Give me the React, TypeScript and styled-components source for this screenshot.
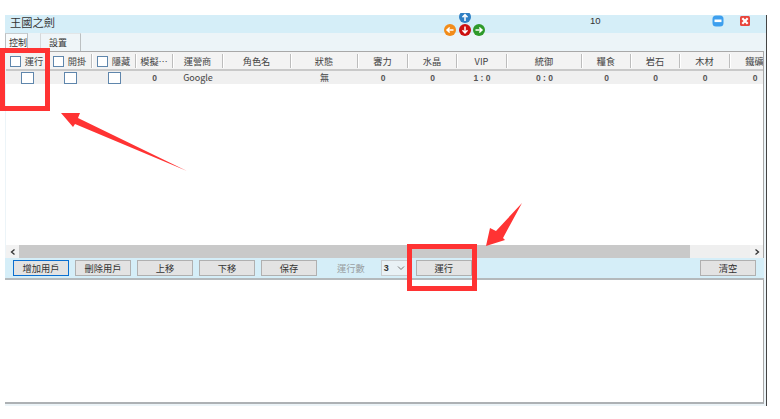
import React from "react";
import styled, { createGlobalStyle } from "styled-components";

const Global = createGlobalStyle`
  html, body { margin: 0; padding: 0; background: #fff; }
  body { width: 780px; height: 419px; overflow: hidden; font-family: "Noto Sans CJK TC", "Liberation Sans", sans-serif; color: #3a3a3a; }
`;

const Page = styled.div`
  position: relative;
  width: 780px;
  height: 419px;
  padding: 15px 0 0 5px;
  box-sizing: border-box;
  overflow: hidden;
`;

const Win = styled.div`
  width: 762px;
  height: 391px;
  display: flex;
  flex-direction: column;
  border-right: 1px solid #444;
  box-sizing: border-box;
  background: #ecf4f8;
`;

const TitleBar = styled.div`
  height: 18px;
  flex: none;
  background: #d5eef8;
  display: flex;
  align-items: flex-start;
  padding-left: 5px;
`;

const Title = styled.div`
  font-size: 11.25px;
  line-height: 14px;
  color: #333;
  flex: none;
`;

const Counter = styled.div`
  font-family: "Liberation Sans", sans-serif;
  font-size: 9.5px;
  line-height: 12px;
  margin: 0 0 0 535px;
  width: 122px;
  flex: none;
  color: #333;
`;

const WinBtn = styled.svg`
  width: 12px;
  height: 12px;
  flex: none;
  margin-right: 15px;
  margin-top: 0;
`;

const Nav = styled.svg`
  position: absolute;
  left: 442px;
  top: 13px;
  width: 46px;
  height: 24px;
`;

const Tabs = styled.div`
  height: 18px;
  flex: none;
  display: flex;
  background: #ecf4f8;
`;

const Tab = styled.div<{ $active?: boolean }>`
  width: ${(p) => (p.$active ? "23px" : "41px")};
  margin-right: ${(p) => (p.$active ? "12px" : "0")};
  padding: ${(p) => (p.$active ? "0 0 0 3px" : "0 5px 0 0")};
  box-sizing: border-box;
  font-size: 9px;
  line-height: 17px;
  text-align: center;
  color: #333;
  background: ${(p) => (p.$active ? "#f8fbfc" : "#eff5f8")};
  border-right: 1px solid #bcc0c2;
  border-left: 1px solid ${(p) => (p.$active ? "#bcc0c2" : "#d5d8da")};
  border-top: 1px solid ${(p) => (p.$active ? "#c8cccf" : "#e2e6e8")};
`;

const TablePanel = styled.div`
  height: 207px;
  flex: none;
  margin-right: 2px;
  margin-left: 1px;
  display: flex;
  flex-direction: column;
  background: #fff;
  border-top: 1px solid #a8a8a8;
  border-right: 1px solid #a8a8a8;
  box-sizing: border-box;
  overflow: hidden;
`;

const Grid = styled.div`
  flex: 1;
  min-height: 0;
  overflow: hidden;
`;

const cols = "42px 44px 44px 37px 50px 68px 67px 50px 49px 50px 75px 49px 49px 50px 50px";

const HeadRow = styled.div`
  display: grid;
  grid-template-columns: ${cols};
  width: 774px;
  height: 19px;
  background: #f3f3f3;
  border-bottom: 2px solid #c9c9c9;
  box-sizing: border-box;
`;

const HeadCell = styled.div`
  display: flex;
  align-items: center;
  justify-content: center;
  gap: 4px;
  font-size: 9.2px;
  color: #444;
  white-space: nowrap;
  overflow: hidden;
  margin: 2px 0 1px;
  border-right: 1px solid #bdbdbd;
  box-shadow: 1px 0 0 #fff;
`;

const Check = styled.span<{ $big?: boolean }>`
  display: inline-block;
  flex: none;
  box-sizing: border-box;
  width: ${(p) => (p.$big ? "13px" : "11px")};
  height: ${(p) => (p.$big ? "12px" : "11px")};
  background: #fff;
  border: 1px solid #5f86ac;
`;

const DataRow = styled.div`
  display: grid;
  grid-template-columns: ${cols};
  width: 774px;
  height: 13px;
  background: #f0f0f0;
`;

const DataCell = styled.div`
  display: flex;
  align-items: center;
  justify-content: center;
  font-family: "Liberation Sans", "Noto Sans CJK TC", sans-serif;
  font-size: 8.5px;
  font-weight: 700;
  color: #555;
  white-space: nowrap;
`;

const PlainCell = styled(DataCell)`
  font-family: "Noto Sans CJK TC", "Liberation Sans", sans-serif;
  font-weight: 400;
  font-size: 9px;
  color: #444;
`;

const ScrollBar = styled.div`
  height: 13px;
  flex: none;
  display: flex;
  align-items: stretch;
  background: #efefef;
`;

const ScrollArrow = styled.div`
  width: 13px;
  flex: none;
  display: flex;
  align-items: center;
  justify-content: center;
  background: #f2f2f2;
`;

const Thumb = styled.div`
  width: 671px;
  flex: none;
  background: #c9c9c9;
`;

const Track = styled.div`
  flex: 1;
`;

const Toolbar = styled.div`
  height: 22px;
  flex: none;
  display: flex;
  align-items: center;
  gap: 6px;
  padding: 0 0 1px 8px;
  margin-right: 2px;
  box-sizing: border-box;
  background: #d5eef8;
  border-bottom: 2px solid #b4b9bc;
`;

const Btn = styled.div<{ $focus?: boolean }>`
  width: 56px;
  height: 16px;
  flex: none;
  box-sizing: border-box;
  font-size: 9.25px;
  line-height: 14px;
  text-align: center;
  color: #333;
  background: #e3e3e3;
  border: ${(p) => (p.$focus ? "1px solid #0a6fd0" : "1px solid #b0b0b0")};
`;

const Label = styled.div`
  font-size: 9.25px;
  color: #9a9fa2;
  margin: 0 10px 0 14px;
  flex: none;
`;

const Select = styled.div`
  width: 29px;
  height: 16px;
  flex: none;
  box-sizing: border-box;
  display: flex;
  align-items: center;
  justify-content: space-between;
  padding: 0 4px 0 2px;
  font-family: "Liberation Sans", sans-serif;
  font-size: 9px;
  font-weight: 700;
  color: #333;
  background: #e9f1f5;
  border: 1px solid #c9cdd0;
`;

const Spacer = styled.div`
  flex: 1;
`;

const ClearBtn = styled(Btn)`
  margin-right: 8px;
`;

const Output = styled.div`
  flex: 1;
  margin: 0 2px 2px 0;
  background: #fff;
  border-right: 1px solid #a8a8a8;
  border-bottom: 2px solid #adb1b4;
`;

const Overlay = styled.svg`
  position: absolute;
  left: 0;
  top: 0;
  width: 780px;
  height: 419px;
  pointer-events: none;
`;

const heads = ["模擬…", "運營商", "角色名", "狀態", "審力", "水晶", "VIP", "統御", "糧食", "岩石", "木材", "鐵礦"];
const values = ["0", "Google", "", "無", "0", "0", "1 : 0", "0 : 0", "0", "0", "0", "0"];

const Chevron = ({ dir }: { dir: "l" | "r" | "d" }) => (
  <svg width="8" height="8" viewBox="0 0 8 8">
    <path
      d={dir === "l" ? "M5.5 1.5 2.5 4l3 2.5" : dir === "r" ? "M2.5 1.5 5.5 4l-3 2.5" : "M1 2.5 4 5.5 7 2.5"}
      fill="none"
      stroke={dir === "d" ? "#777" : "#333"}
      strokeWidth={dir === "d" ? 1 : 1.3}
    />
  </svg>
);

export default function App() {
  return (
    <Page>
      <Global />
      <Win>
        <TitleBar>
          <Title>王國之劍</Title>
          <Counter>10</Counter>
          <WinBtn viewBox="0 0 12 12">
            <rect x="0.5" y="0.5" width="11" height="11" rx="3.5" fill="#3d9fee" />
            <rect x="2.5" y="4.5" width="7" height="2.6" fill="#fff" />
          </WinBtn>
          <WinBtn viewBox="0 0 12 12">
            <rect x="1" y="1" width="10" height="10" rx="1.5" fill="#e8453c" />
            <path d="M3.3 3.3 8.7 8.7M8.7 3.3 3.3 8.7" stroke="#fff" strokeWidth="2.2" />
          </WinBtn>
        </TitleBar>
        <Tabs>
          <Tab $active>控制</Tab>
          <Tab>設置</Tab>
        </Tabs>
        <TablePanel>
          <Grid>
            <HeadRow>
              <HeadCell><Check />運行</HeadCell>
              <HeadCell><Check />開掛</HeadCell>
              <HeadCell><Check />隱藏</HeadCell>
              {heads.map((h) => (
                <HeadCell key={h}>{h}</HeadCell>
              ))}
            </HeadRow>
            <DataRow>
              <DataCell><Check $big /></DataCell>
              <DataCell><Check $big /></DataCell>
              <DataCell><Check $big /></DataCell>
              {values.map((v, i) =>
                v === "Google" || v === "無" ? (
                  <PlainCell key={i}>{v}</PlainCell>
                ) : (
                  <DataCell key={i}>{v}</DataCell>
                )
              )}
            </DataRow>
          </Grid>
          <ScrollBar>
            <ScrollArrow><Chevron dir="l" /></ScrollArrow>
            <Thumb />
            <Track />
            <ScrollArrow><Chevron dir="r" /></ScrollArrow>
          </ScrollBar>
        </TablePanel>
        <Toolbar>
          <Btn $focus>增加用戶</Btn>
          <Btn>刪除用戶</Btn>
          <Btn>上移</Btn>
          <Btn>下移</Btn>
          <Btn>保存</Btn>
          <Label>運行數</Label>
          <Select>3<Chevron dir="d" /></Select>
          <Btn>運行</Btn>
          <Spacer />
          <ClearBtn>清空</ClearBtn>
        </Toolbar>
        <Output />
      </Win>

      <Nav viewBox="0 0 46 24">
        <circle cx="23" cy="4" r="6" fill="#2f7fc4" />
        <path d="M23 8V2M20.5 4.2 23 1.5l2.5 2.7" fill="none" stroke="#fff" strokeWidth="1.5" />
        <rect x="15" y="-2" width="16" height="2" fill="#fff" />
        <circle cx="8" cy="17" r="6" fill="#f28c1a" />
        <path d="M11.5 17H5M7.7 14.5 5 17l2.7 2.5" fill="none" stroke="#fff" strokeWidth="1.5" />
        <circle cx="23" cy="17" r="6" fill="#cc0f0f" />
        <path d="M23 13.5V20M20.5 17.3 23 20l2.5-2.7" fill="none" stroke="#fff" strokeWidth="1.5" />
        <circle cx="37" cy="17" r="6" fill="#2f9a2a" />
        <path d="M33.5 17H40M37.3 14.5 40 17l-2.7 2.5" fill="none" stroke="#fff" strokeWidth="1.5" />
      </Nav>

      <Overlay viewBox="0 0 780 419">
        <rect x="2.5" y="50.5" width="45" height="58" fill="none" stroke="#ff3333" strokeWidth="5" />
        <rect x="409.5" y="246.5" width="65" height="42" fill="none" stroke="#ff3333" strokeWidth="5" />
        <path d="M61 113 80 113 78 118 187 171 75 124 73 127Z" fill="#ff3333" />
        <path d="M486 246 490 228 496 231 522 203 503 238 505 240Z" fill="#ff3333" />
      </Overlay>
    </Page>
  );
}
